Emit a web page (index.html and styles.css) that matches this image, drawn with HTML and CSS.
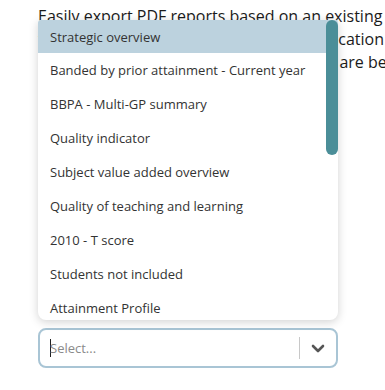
FILE: index.html
```html
<!DOCTYPE html>
<html lang="en">
<head>
    <meta charset="UTF-8">
    <meta name="viewport" content="width=device-width, initial-scale=1.0">
    <title>Export reports</title>
    <link rel="stylesheet" href="styles.css">
</head>
<body>
    <div class="page">
        <p class="intro">
            <span class="line">Easily export PDF reports based on an existing</span>
            <span class="line">template or build one for a specific application</span>
            <span class="line">and share it with your staff; reports that are be<span class="hl">ing</span> generated</span>
        </p>

        <div class="field">
            <div class="menu">
                <ul class="options">
                    <li class="active">Strategic overview</li>
                    <li>Banded by prior attainment - Current year</li>
                    <li>BBPA - Multi-GP summary</li>
                    <li>Quality indicator</li>
                    <li>Subject value added overview</li>
                    <li>Quality of teaching and learning</li>
                    <li>2010 - T score</li>
                    <li>Students not included</li>
                    <li>Attainment Profile</li>
                    <li>Progress summary</li>
                </ul>
                <div class="scroll-thumb"></div>
            </div>

            <div class="select">
                <div class="value"><span class="caret"></span><span class="placeholder">Select...</span></div>
                <span class="divider"></span>
                <span class="arrow">
                    <svg width="14" height="9" viewBox="0 0 14 9"><path d="M2 2 L7 7 L12 2" fill="none" stroke="#555" stroke-width="2.6" stroke-linecap="round" stroke-linejoin="round"/></svg>
                </span>
            </div>
        </div>
    </div>
</body>
</html>
```

FILE: styles.css
```css
body {
    margin: 0;
    font-family: 'Open Sans', sans-serif;
    color: #222;
    background-color: #fff;
    overflow: hidden;
}

.page {
    padding: 5px 0 0 38px;
}

.intro {
    margin: 0;
    font-size: 16px;
    line-height: 23px;
    color: #1b1b1b;
}

.intro .line {
    display: block;
    white-space: nowrap;
}

.intro .hl {
    color: #d98a2b;
}

.field {
    position: relative;
    width: 300px;
    margin-top: 254px;
}

.menu {
    position: absolute;
    left: 0;
    right: 0;
    bottom: calc(100% + 8px);
    height: 300px;
    background-color: #fff;
    border-radius: 3px 3px 8px 8px;
    box-shadow: 0 2px 10px rgba(0, 0, 0, 0.18);
    overflow: hidden;
}

.options {
    list-style: none;
    margin: 0;
    padding: 0;
}

.options li {
    height: 34px;
    line-height: 35px;
    padding-left: 12px;
    font-size: 13px;
    color: #333;
    white-space: nowrap;
}

.options li.active {
    height: 33px;
    line-height: 34px;
    background-color: #bcd2de;
}

.scroll-thumb {
    position: absolute;
    top: 0;
    right: 0;
    width: 12px;
    height: 135px;
    border-radius: 6px;
    background-color: #4b8e98;
}

.select {
    display: flex;
    align-items: center;
    height: 40px;
    box-sizing: border-box;
    border: 2px solid #a9c5d5;
    border-radius: 8px;
    background-color: #fff;
}

.value {
    flex: 1;
    display: flex;
    align-items: center;
    padding-left: 10px;
    font-size: 13px;
}

.caret {
    width: 1px;
    height: 18px;
    background-color: #222;
    margin-right: -1px;
}

.placeholder {
    color: #8a8a8a;
}

.divider {
    width: 1px;
    height: 22px;
    background-color: #c8c8c8;
}

.arrow {
    width: 36px;
    display: flex;
    justify-content: center;
    align-items: center;
}
```
